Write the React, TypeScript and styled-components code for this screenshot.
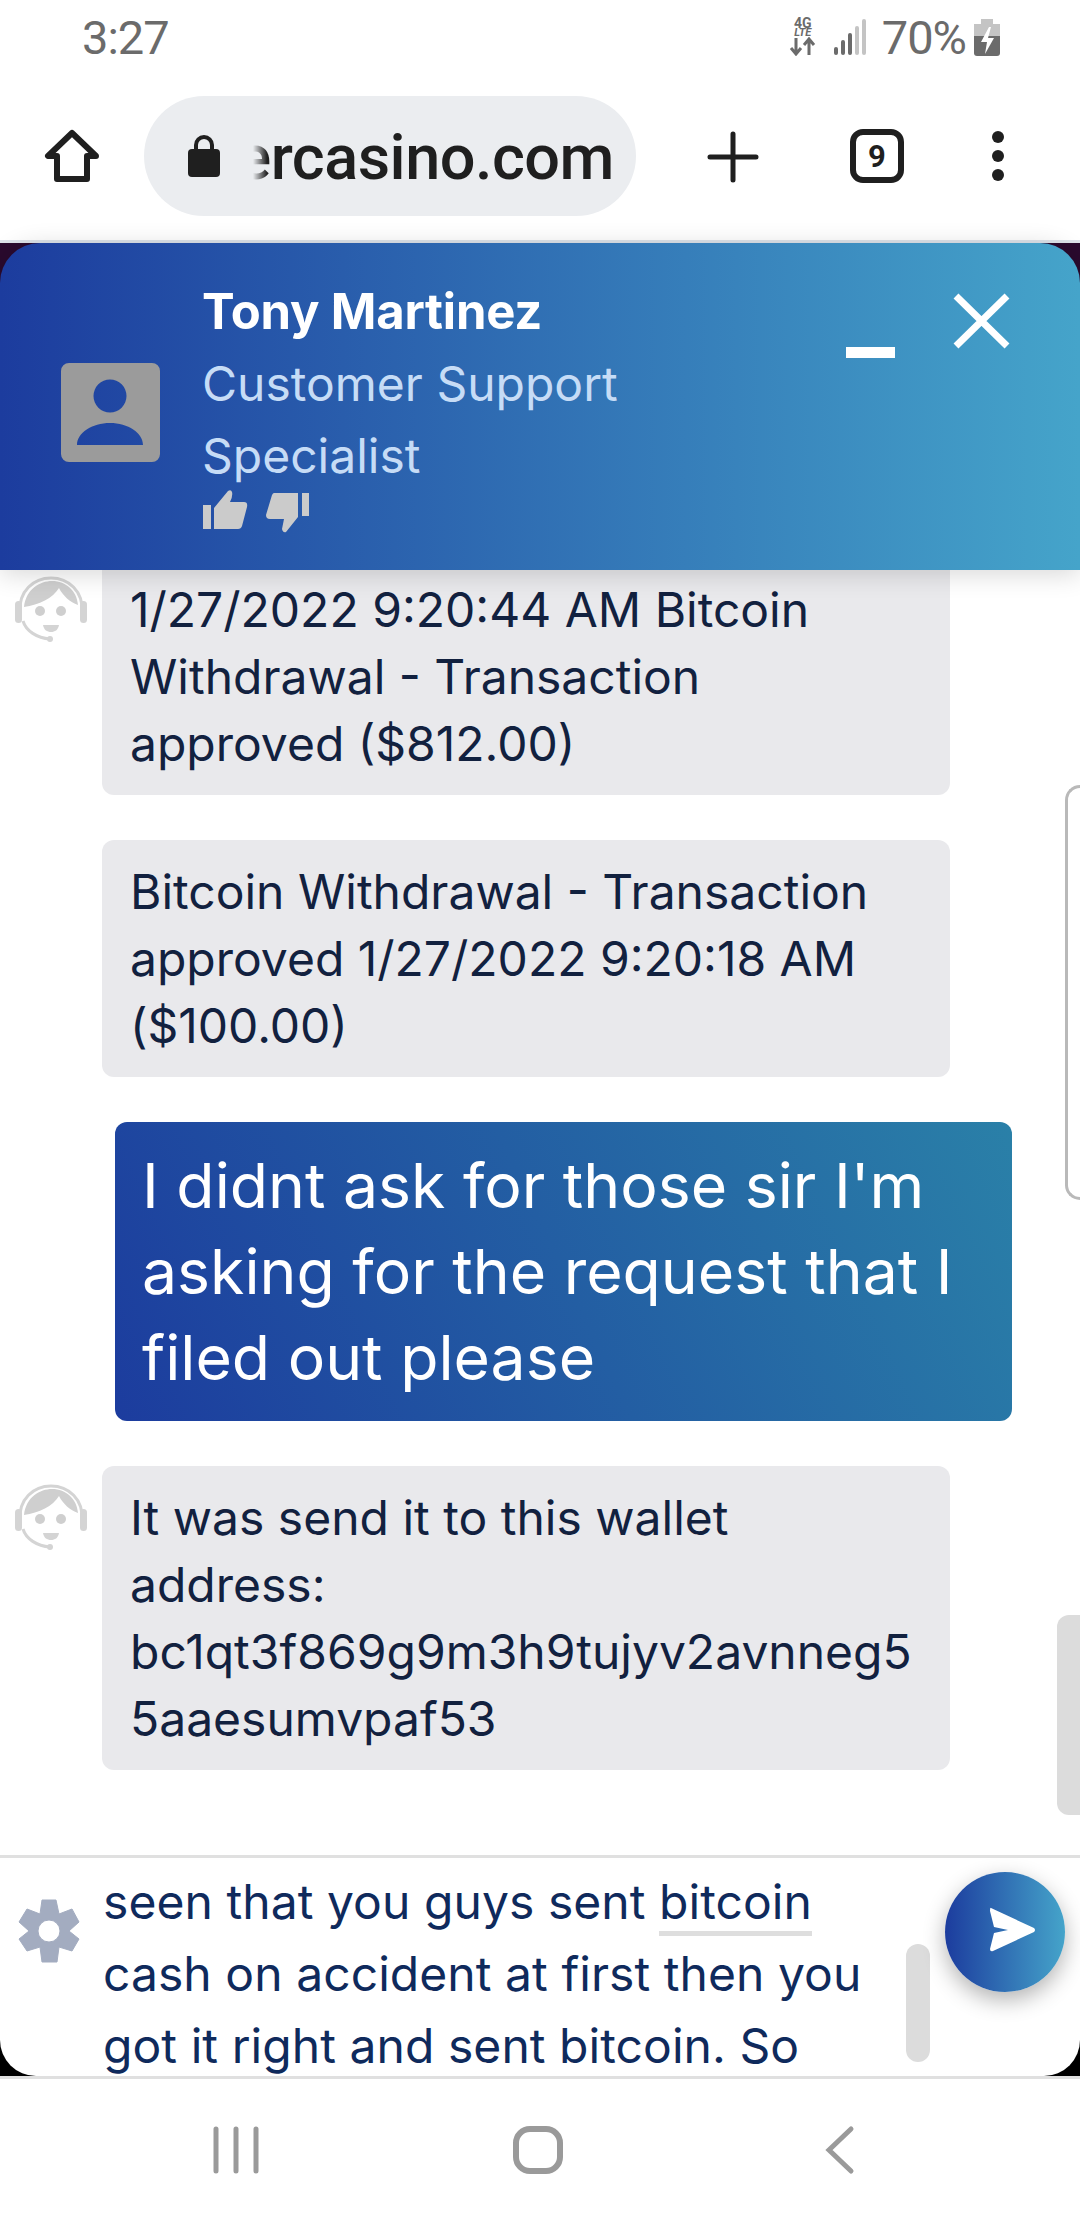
import React from "react";
import styled, { createGlobalStyle } from "styled-components";

const GlobalStyle = createGlobalStyle`
  html, body {
    margin: 0;
    padding: 0;
    background: #fff;
  }
  * {
    box-sizing: border-box;
  }
`;

const Phone = styled.div`
  width: 1080px;
  height: 2220px;
  display: flex;
  flex-direction: column;
  overflow: hidden;
  background: #fff;
  font-family: Inter, "Liberation Sans", sans-serif;
`;

const StatusBar = styled.div`
  height: 74px;
  flex: none;
  display: flex;
  align-items: center;
  justify-content: space-between;
  padding: 0 80px 0 82px;
  color: #6b6b6b;
  font-family: Roboto, sans-serif;
  font-size: 47px;
  letter-spacing: -1px;
`;

const StatusRight = styled.div`
  display: flex;
  align-items: center;
`;

const NetStack = styled.div`
  width: 28px;
  margin-right: 16px;
  display: flex;
  flex-direction: column;
  align-items: center;
  font-weight: 700;
  letter-spacing: 0;
`;

const NetLabel = styled.span<{ $small?: boolean }>`
  font-size: ${(p) => (p.$small ? "11px" : "14px")};
  line-height: ${(p) => (p.$small ? "9px" : "10px")};
  font-style: ${(p) => (p.$small ? "italic" : "normal")};
`;

const NetArrows = styled.svg`
  width: 27px;
  height: 19px;
`;

const SignalIcon = styled.svg`
  width: 34px;
  height: 36px;
  margin-right: 15px;
`;

const BatteryIcon = styled.svg`
  width: 26px;
  height: 37px;
  margin-left: 8px;
`;

const Toolbar = styled.div`
  height: 166px;
  flex: none;
  display: flex;
  align-items: center;
  padding: 0 0 2px 44px;
`;

const HomeIcon = styled.svg`
  width: 56px;
  height: 56px;
  flex: none;
  margin-right: 44px;
`;

const UrlPill = styled.div`
  width: 492px;
  height: 120px;
  flex: none;
  border-radius: 60px;
  background: #ebedf0;
  display: flex;
  align-items: center;
  padding-left: 43px;
`;

const LockIcon = styled.svg`
  width: 34px;
  height: 42px;
  flex: none;
  margin-right: 32px;
`;

const UrlClip = styled.div`
  width: 361px;
  margin-top: 4px;
  overflow: hidden;
  display: flex;
  justify-content: flex-end;
  color: #1f1f1f;
  font-family: Roboto, sans-serif;
  font-weight: 500;
  font-size: 63px;
  line-height: 76px;
  letter-spacing: -0.5px;
  white-space: nowrap;
  -webkit-mask-image: linear-gradient(to right, transparent 0, #000 14px);
  mask-image: linear-gradient(to right, transparent 0, #000 14px);
`;

const PlusIcon = styled.svg`
  width: 52px;
  height: 52px;
  flex: none;
  margin: 2px 0 0 71px;
`;

const TabCount = styled.div`
  width: 54px;
  height: 54px;
  flex: none;
  margin-left: 91px;
  border: 6px solid #1f1f1f;
  border-radius: 13px;
  display: flex;
  align-items: center;
  justify-content: center;
  color: #1f1f1f;
  font-family: Roboto, sans-serif;
  font-weight: 700;
  font-size: 31px;
`;

const MenuDots = styled.div`
  flex: none;
  margin-left: 88px;
  display: flex;
  flex-direction: column;
  gap: 7px;
  span {
    width: 12px;
    height: 12px;
    border-radius: 50%;
    background: #1f1f1f;
  }
`;

const ChatFrame = styled.div`
  flex: none;
  display: flex;
  flex-direction: column;
  border-top: 3px solid #dde3ea;
  background: linear-gradient(to bottom, #2a0a2e 0, #2a0a2e 120px, #000 120px);
`;

const ChatHeader = styled.div`
  height: 327px;
  flex: none;
  position: relative;
  z-index: 2;
  display: flex;
  align-items: center;
  padding-left: 61px;
  border-radius: 40px 40px 0 0;
  background: linear-gradient(to right, #1c3c9e 0%, #45a4ca 100%);
  box-shadow: 0 4px 26px rgba(0, 0, 0, 0.16);
`;

const AgentPicture = styled.svg`
  width: 99px;
  height: 99px;
  flex: none;
  margin: 12px 42px 0 0;
`;

const AgentInfo = styled.div`
  display: flex;
  flex-direction: column;
  padding-bottom: 4px;
`;

const AgentName = styled.div`
  color: #fff;
  font-weight: 700;
  font-size: 49px;
  line-height: 72px;
  letter-spacing: -0.2px;
`;

const AgentRole = styled.div`
  width: 470px;
  color: #c6dcf6;
  font-size: 48px;
  line-height: 72px;
`;

const RatingRow = styled.div`
  display: flex;
  gap: 17px;
  margin-top: -4px;
`;

const ThumbIcon = styled.svg`
  width: 46px;
  height: 46px;
`;

const WindowButtons = styled.div`
  position: absolute;
  top: 50px;
  right: 70px;
  display: flex;
  align-items: flex-end;
  gap: 58px;
`;

const MinimizeBar = styled.div`
  width: 49px;
  height: 11px;
  margin-bottom: -9px;
  background: #fff;
`;

const CloseIcon = styled.svg`
  width: 57px;
  height: 56px;
`;

const Messages = styled.div`
  height: 1285px;
  flex: none;
  position: relative;
  overflow: hidden;
  display: flex;
  flex-direction: column;
  gap: 45px;
  background: #fff;
`;

const AgentRow = styled.div<{ $clipped?: boolean }>`
  display: flex;
  margin-top: ${(p) => (p.$clipped ? "-12px" : "0")};
`;

const AgentFace = styled.svg<{ $hidden?: boolean }>`
  width: 102px;
  height: 70px;
  flex: none;
  margin-top: 17px;
  padding: 0 14px;
  visibility: ${(p) => (p.$hidden ? "hidden" : "visible")};
`;

const AgentBubble = styled.div`
  width: 848px;
  padding: 18px 28px;
  border-radius: 12px;
  background: #e9e9ec;
  color: #12213f;
  font-size: 48px;
  line-height: 67px;
  overflow-wrap: anywhere;
`;

const UserRow = styled.div`
  display: flex;
  padding-left: 115px;
`;

const UserBubble = styled.div`
  width: 897px;
  padding: 20px 27px 21px;
  border-radius: 12px;
  background: linear-gradient(65deg, #1c3c9e 0%, #2a80a8 100%);
  color: #fff;
  font-size: 62.5px;
  line-height: 86px;
`;

const SideOutline = styled.div`
  position: absolute;
  top: 215px;
  right: 0;
  width: 15px;
  height: 415px;
  border: 3px solid #b9b9b9;
  border-right: none;
  border-radius: 15px 0 0 15px;
`;

const ScrollThumb = styled.div`
  position: absolute;
  top: 1045px;
  right: 0;
  width: 23px;
  height: 200px;
  border-radius: 12px 0 0 12px;
  background: #dcdcdc;
`;

const Composer = styled.div`
  height: 221px;
  flex: none;
  position: relative;
  display: flex;
  overflow: hidden;
  border-top: 3px solid #e0e0e0;
  border-radius: 0 0 36px 36px;
  background: #fff;
`;

const SettingsIcon = styled.svg`
  width: 100px;
  height: 85px;
  flex: none;
  margin-top: 32px;
`;

const Draft = styled.div`
  width: 800px;
  margin: 8px 0 0 3px;
  color: #0f2a5c;
  font-size: 48px;
  line-height: 72px;
  letter-spacing: 0.06px;
  white-space: pre-line;
`;

const SpellMark = styled.span`
  border-bottom: 5px solid #dedede;
`;

const DraftScroll = styled.div`
  position: absolute;
  top: 86px;
  left: 906px;
  width: 24px;
  height: 118px;
  border-radius: 12px;
  background: #dcdcdc;
`;

const SendButton = styled.div`
  position: absolute;
  top: 14px;
  left: 945px;
  width: 120px;
  height: 120px;
  border-radius: 50%;
  background: linear-gradient(to right, #1c3c9e 0%, #45a4ca 100%);
  box-shadow: 0 8px 22px rgba(0, 0, 0, 0.3);
`;

const SendIcon = styled.svg`
  display: block;
  width: 120px;
  height: 120px;
`;

const NavBar = styled.div`
  flex: 1;
  display: flex;
  align-items: center;
  justify-content: center;
  gap: 250px;
  padding: 0 4px 0 0;
  border-top: 3px solid #e0e0e0;
  background: #fff;
`;

const NavIcon = styled.svg`
  width: 52px;
  height: 52px;
`;

const Face = ({ hidden }: { hidden?: boolean }) => (
  <AgentFace viewBox="0 0 74 70" $hidden={hidden}>
    <path d="M6 38C4 16 20 3 37 3s33 13 31 35" fill="none" stroke="#d4d4d4" strokeWidth="3" />
    <path d="M10 32C12 14 26 6 38 6c14 0 25 10 26 24-8-3-15-9-19-17-6 10-20 17-35 19z" fill="#cfcfcf" />
    <rect x="1" y="26" width="7" height="22" rx="3.5" fill="#d4d4d4" />
    <rect x="66" y="26" width="7" height="22" rx="3.5" fill="#d4d4d4" />
    <circle cx="26" cy="36" r="5" fill="#cfcfcf" />
    <circle cx="47" cy="36" r="5" fill="#cfcfcf" />
    <path d="M29 50h16c-1 5-4 7-8 7s-7-2-8-7z" fill="#d4d4d4" />
    <path d="M9 46c3 10 14 17 27 18" fill="none" stroke="#d4d4d4" strokeWidth="3" />
    <circle cx="36" cy="64" r="3" fill="#d4d4d4" />
  </AgentFace>
);

const App: React.FC = () => {
  return (
    <Phone>
      <GlobalStyle />
      <StatusBar>
        <span>3:27</span>
        <StatusRight>
          <NetStack>
            <NetLabel>4G</NetLabel>
            <NetLabel $small>LTE</NetLabel>
            <NetArrows viewBox="0 0 27 19">
              <path d="M7 1v15M2 11l5 6 5-6M20 18V3M15 8l5-6 5 6" fill="none" stroke="#6b6b6b" strokeWidth="3" />
            </NetArrows>
          </NetStack>
          <SignalIcon viewBox="0 0 34 36">
            <rect x="1" y="28" width="4" height="8" rx="2" fill="#6b6b6b" />
            <rect x="8" y="21" width="4" height="15" rx="2" fill="#6b6b6b" />
            <rect x="15" y="14" width="4" height="22" rx="2" fill="#6b6b6b" />
            <rect x="22" y="7" width="4" height="29" rx="2" fill="#c4c4c4" />
            <rect x="29" y="0" width="4" height="36" rx="2" fill="#c4c4c4" />
          </SignalIcon>
          <span>70%</span>
          <BatteryIcon viewBox="0 0 26 37">
            <path d="M7 0h12v5h7v12H0V5h7z" fill="#c4c4c4" />
            <path d="M0 17h26v17a3 3 0 0 1-3 3H3a3 3 0 0 1-3-3z" fill="#6b6b6b" />
            <path d="M15 8l-8 15h6l-2 12 9-16h-6l3-11z" fill="#fff" />
          </BatteryIcon>
        </StatusRight>
      </StatusBar>
      <Toolbar>
        <HomeIcon viewBox="0 0 56 56">
          <path d="M28 5L4 28h9v23h30V28h9z" fill="none" stroke="#1f1f1f" strokeWidth="6" strokeLinejoin="round" />
        </HomeIcon>
        <UrlPill>
          <LockIcon viewBox="0 0 34 42">
            <path d="M9 15v-5a8 8 0 0 1 16 0v5" fill="none" stroke="#1f1f1f" strokeWidth="4" />
            <rect x="1" y="14" width="32" height="28" rx="4" fill="#1f1f1f" />
          </LockIcon>
          <UrlClip>ercasino.com</UrlClip>
        </UrlPill>
        <PlusIcon viewBox="0 0 52 52">
          <path d="M26 3v46M3 26h46" stroke="#1f1f1f" strokeWidth="5" strokeLinecap="round" />
        </PlusIcon>
        <TabCount>9</TabCount>
        <MenuDots>
          <span />
          <span />
          <span />
        </MenuDots>
      </Toolbar>
      <ChatFrame>
        <ChatHeader>
          <AgentPicture viewBox="0 0 99 99">
            <path
              d="M8 0h83a8 8 0 0 1 8 8v83a8 8 0 0 1-8 8H8a8 8 0 0 1-8-8V8a8 8 0 0 1 8-8zM49 16.500a16.500 16.500 0 1 0 0 33a16.500 16.500 0 0 0 0-33zM16 82h66c0-12-15-22-33-22s-33 10-33 22z"
              fill="#9b9b9b"
              fillRule="evenodd"
            />
          </AgentPicture>
          <AgentInfo>
            <AgentName>Tony Martinez</AgentName>
            <AgentRole>Customer Support Specialist</AgentRole>
            <RatingRow>
              <ThumbIcon viewBox="12 5 46 46">
                <path d="M13 22h8v24h-8zM24 25L38 8q3-2 4 1q1 4-2 10h14q4 0 3 5l-5 19q-1 3-4 3H24z" fill="#cbcbcb" />
              </ThumbIcon>
              <ThumbIcon viewBox="75 5 46 46">
                <path d="M112 10h7v23h-7zM84 10h24v24L96 49q-3 1-4-3l2-10H80q-4 0-4-4l6-20q1-2 2-2z" fill="#cbcbcb" />
              </ThumbIcon>
            </RatingRow>
          </AgentInfo>
          <WindowButtons>
            <MinimizeBar />
            <CloseIcon viewBox="0 0 57 56">
              <path d="M3 3l51 50M54 3L3 53" stroke="#fff" strokeWidth="7" />
            </CloseIcon>
          </WindowButtons>
        </ChatHeader>
        <Messages>
          <AgentRow $clipped>
            <Face />
            <AgentBubble>1/27/2022 9:20:44 AM Bitcoin Withdrawal - Transaction approved ($812.00)</AgentBubble>
          </AgentRow>
          <AgentRow>
            <Face hidden />
            <AgentBubble>Bitcoin Withdrawal - Transaction approved 1/27/2022 9:20:18 AM ($100.00)</AgentBubble>
          </AgentRow>
          <UserRow>
            <UserBubble>I didnt ask for those sir I'm asking for the request that I filed out please</UserBubble>
          </UserRow>
          <AgentRow>
            <Face />
            <AgentBubble>It was send it to this wallet address: bc1qt3f869g9m3h9tujyv2avnneg55aaesumvpaf53</AgentBubble>
          </AgentRow>
          <SideOutline />
          <ScrollThumb />
        </Messages>
        <Composer>
          <SettingsIcon viewBox="0 0 100 85">
            <path
              d="M42 10H56L59 24L72 19L79 32L69 41L79 49L72 61L59 57L57 72H42L40 57L27 61L19 49L29 41L19 32L27 19L40 24ZM49 30a11 11 0 1 0 0 22a11 11 0 0 0 0-22z"
              fill="#a3acc0"
              fillRule="evenodd"
              stroke="#a3acc0"
              strokeWidth="1"
              strokeLinejoin="round"
            />
          </SettingsIcon>
          <Draft>
            seen that you guys sent <SpellMark>bitcoin</SpellMark>
            {"\n"}cash on accident at first then you
            {"\n"}got it right and sent bitcoin. So
          </Draft>
          <DraftScroll />
          <SendButton>
            <SendIcon viewBox="5 7 120 120">
              <path d="M51 43L94 63q2 2 0 4L53 86q-3 1-3-2L54 68L68 65L54 62L50 46q0-4 1-3z" fill="#fff" />
            </SendIcon>
          </SendButton>
        </Composer>
      </ChatFrame>
      <NavBar>
        <NavIcon viewBox="0 0 52 52">
          <path d="M6 5v42M26 5v42M46 5v42" stroke="#9a9a9a" strokeWidth="5" strokeLinecap="round" />
        </NavIcon>
        <NavIcon viewBox="0 0 52 52">
          <rect x="4" y="5" width="44" height="42" rx="14" fill="none" stroke="#9a9a9a" strokeWidth="6" />
        </NavIcon>
        <NavIcon viewBox="0 0 52 52">
          <path d="M37 5L15 26l22 21" fill="none" stroke="#9a9a9a" strokeWidth="5" strokeLinecap="round" />
        </NavIcon>
      </NavBar>
    </Phone>
  );
};

export default App;
